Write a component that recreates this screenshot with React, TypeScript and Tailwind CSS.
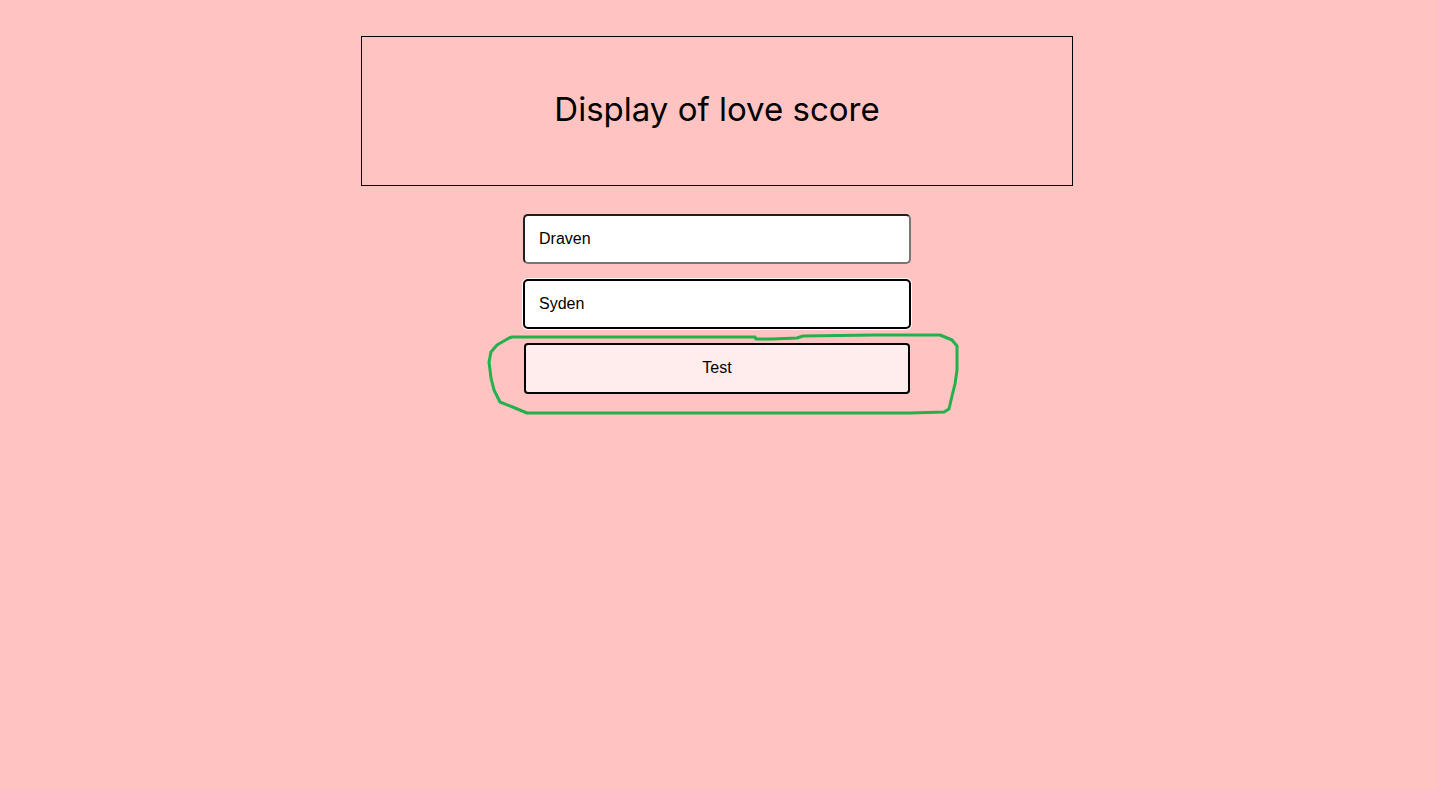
import { useState } from 'react';

export default function App() {
    const [a, setA] = useState('Draven');
    const [b, setB] = useState('Syden');

    return (
        <div className="relative min-h-[789px] w-full bg-[#ffc4c1] pr-[3px] pt-9" style={{ fontFamily: '"Liberation Sans", Arial, sans-serif' }}>
            <div className="mx-auto flex h-[150px] w-[712px] items-center justify-center border border-black pb-[3px]">
                <h1 className="text-[33px] font-normal text-black" style={{ fontFamily: 'Inter, "Noto Sans", sans-serif' }}>
                    Display of love score
                </h1>
            </div>
            <div className="mx-auto mt-7 flex w-[388px] flex-col gap-[15px]">
                <input
                    value={a}
                    onChange={(e) => setA(e.target.value)}
                    className="h-[50px] w-full rounded-[5px] border-2 border-t-[#1f1f1f] border-l-[#1f1f1f] border-r-[#767676] border-b-[#767676] bg-white px-[14px] text-[16px] text-black outline-none"
                />
                <input
                    value={b}
                    onChange={(e) => setB(e.target.value)}
                    className="h-[50px] w-full rounded-[5px] border-2 border-black bg-white px-[14px] text-[16px] text-black outline-none ring-1 ring-white"
                />
                <button className="mx-auto -mt-px h-[51px] w-[386px] rounded-[4px] border-2 border-black bg-[#ffecec] pb-[2px] text-[16px] text-black">
                    Test
                </button>
            </div>
            <svg className="pointer-events-none absolute left-0 top-0" width="1437" height="789" viewBox="0 0 1437 789">
                <path
                    d="M512 337 L755 337 L756 339 L770 339 L772 339 L797 338 L803 336 L875 335 L940 335 L952 340 L957 346 L957 370 L955 384 L952 396 L949 409 L944 412 L910 413 L540 413 L527 413 L515 408 L500 402 L494 390 L491 378 L489 362 L491 352 L497 345 L509 338 Z"
                    fill="none"
                    stroke="#22b14c"
                    strokeWidth="3"
                    strokeLinejoin="round"
                />
            </svg>
        </div>
    );
}
